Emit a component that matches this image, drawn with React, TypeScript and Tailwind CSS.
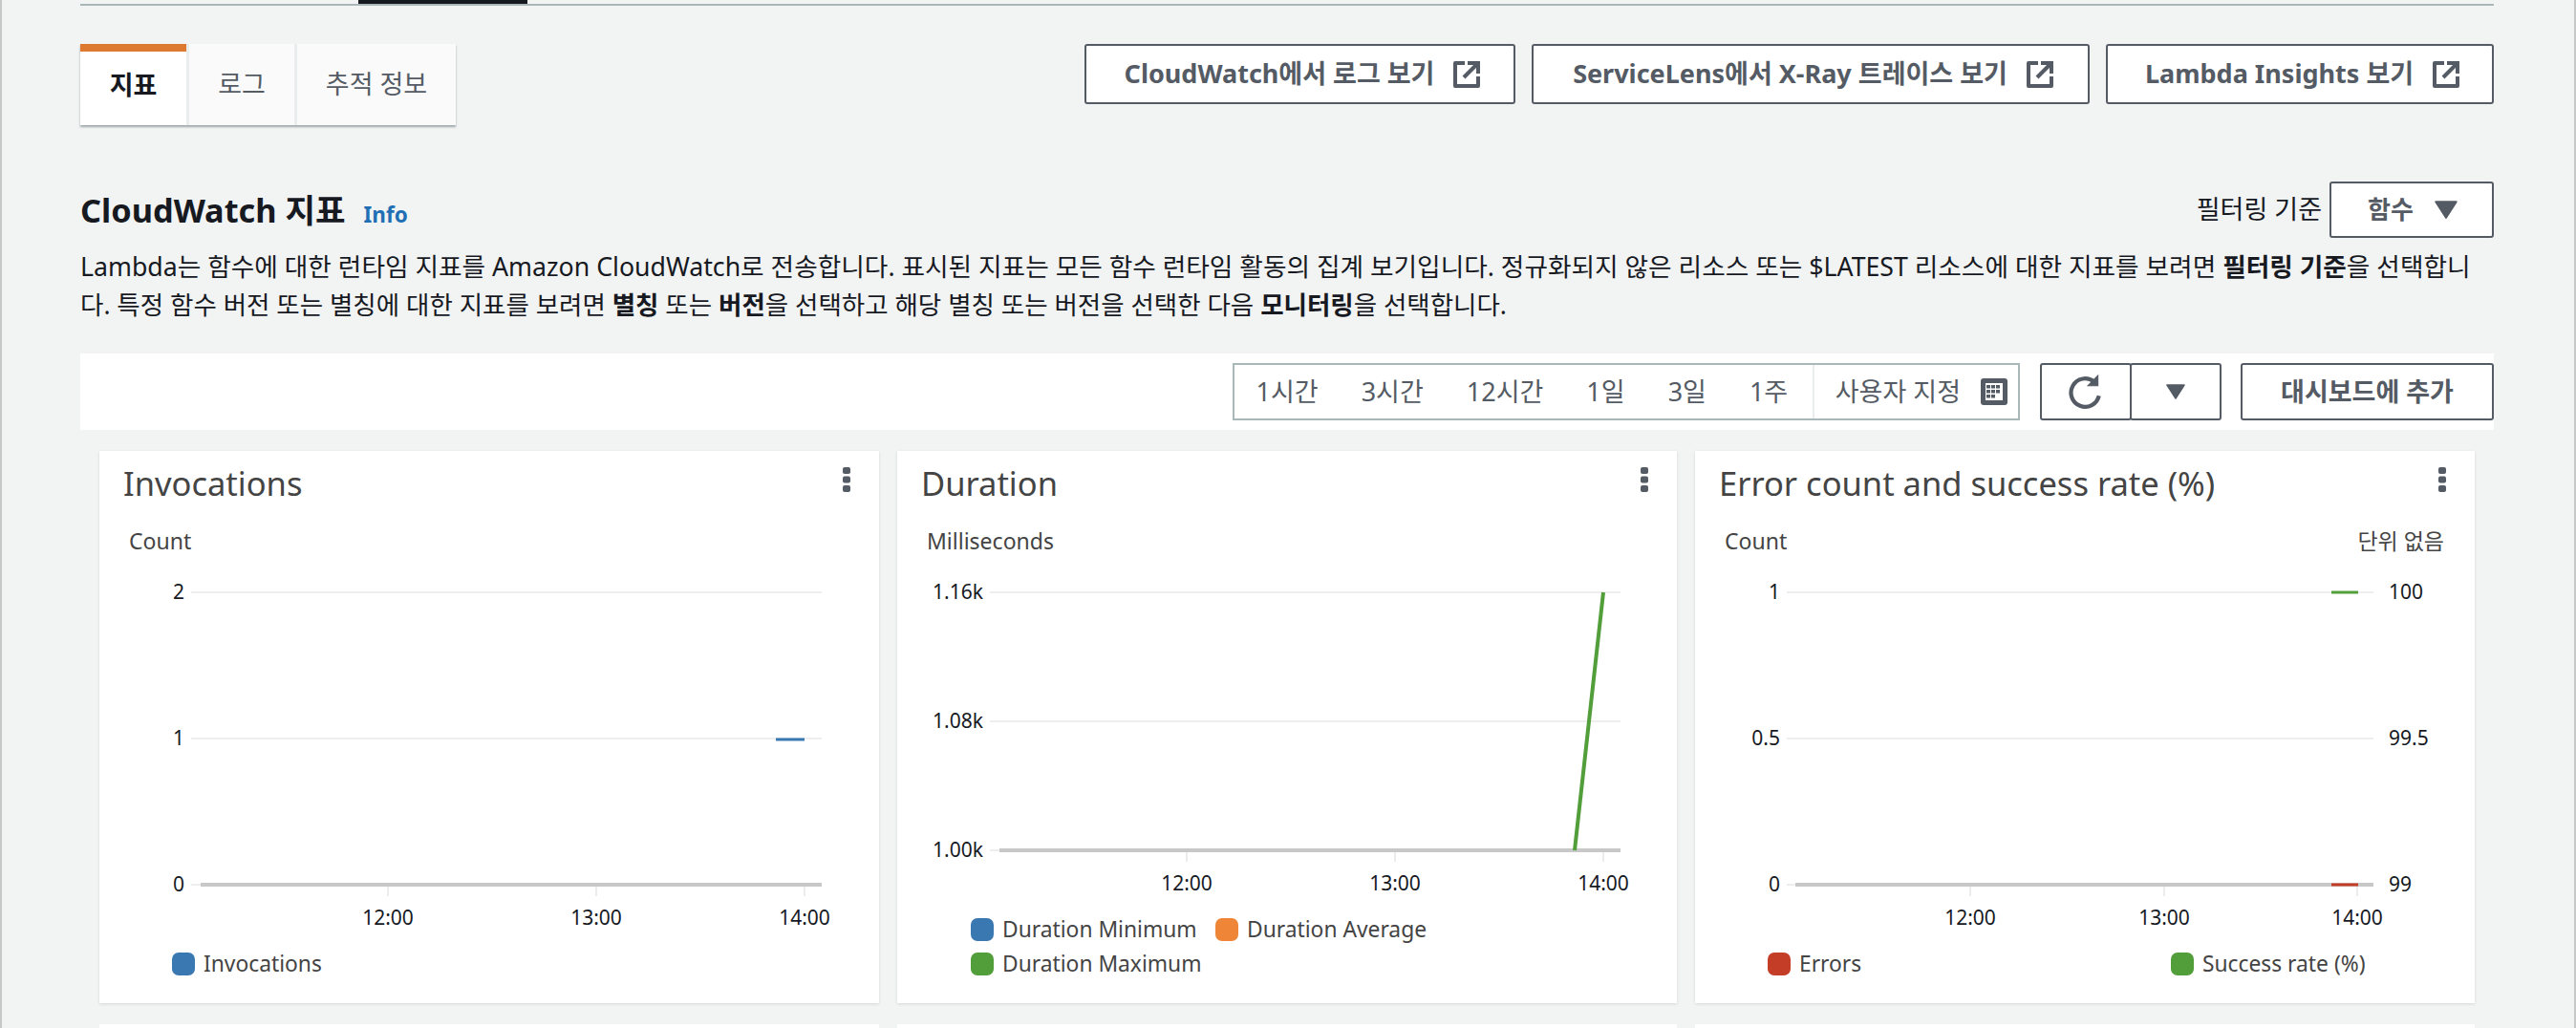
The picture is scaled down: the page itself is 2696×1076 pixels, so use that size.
import React from "react";

interface Segment {
  x1: number;
  y1: number;
  x2: number;
  y2: number;
  color: string;
  width?: number;
}

interface ChartProps {
  title: string;
  unit: string;
  rightUnit?: string;
  height: number;
  gridFrom: number;
  gridTo: number;
  axisFrom: number;
  gridY: number[];
  leftLabels: string[];
  labelX: number;
  rightLabels?: string[];
  ticks: number[];
  segments: Segment[];
  children: React.ReactNode;
}

const ExternalIcon = () => (
  <svg width="30" height="30" viewBox="0 0 30 30" fill="none" stroke="#545b64" strokeWidth="4" className="shrink-0">
    <path d="M13 3H3v24h24V17" strokeLinejoin="round" />
    <path d="M12 18L25 5" />
    <path d="M16 3h11v11" />
  </svg>
);

const Caret = ({ size = 24 }: { size?: number }) => (
  <svg width={size} height={size * 0.8} viewBox="0 0 20 16" fill="#545b64">
    <path d="M1 1h18l-9 14z" stroke="#545b64" strokeWidth="1.5" strokeLinejoin="round" />
  </svg>
);

const CalendarIcon = () => (
  <svg width="28" height="28" viewBox="0 0 28 28">
    <rect x="0" y="0" width="28" height="28" rx="3" fill="#545b64" />
    <rect x="5" y="5" width="18" height="18" fill="#fff" />
    {[6, 11, 16].map((y) =>
      [6, 11, 16].map((x) => (
        <rect key={`${x}-${y}`} x={x} y={y + 1} width="4" height="3.5" fill={y === 16 && x === 16 ? "#fff" : "#545b64"} />
      ))
    )}
  </svg>
);

const RefreshIcon = () => (
  <svg width="38" height="38" viewBox="0 0 36 36" fill="none" stroke="#545b64" strokeWidth="4">
    <path d="M31 22a14 14 0 1 1-5-14" />
    <path d="M30 2v10H20z" fill="#545b64" strokeWidth="1" />
  </svg>
);

const Kebab = () => (
  <svg width="8" height="26" viewBox="0 0 8 26" fill="#545b64" className="shrink-0">
    <rect x="0" y="0" width="8" height="7" rx="2" />
    <rect x="0" y="9.5" width="8" height="7" rx="2" />
    <rect x="0" y="19" width="8" height="7" rx="2" />
  </svg>
);

const LinkButton = ({ label, width }: { label: string; width: string }) => (
  <button className={`flex h-[63px] items-center justify-center gap-[19px] rounded-[3px] border-2 border-[#545b64] bg-white pl-[6px] text-[27px] font-bold text-[#545b64] ${width}`}>
    {label}
    <ExternalIcon />
  </button>
);

const Swatch = ({ color }: { color: string }) => (
  <span className="mr-[9px] inline-block h-[24px] w-[24px] rounded-[7px]" style={{ backgroundColor: color }} />
);

const Chart = ({
  title,
  unit,
  rightUnit,
  height,
  gridFrom,
  gridTo,
  axisFrom,
  gridY,
  leftLabels,
  labelX,
  rightLabels,
  ticks,
  segments,
  children,
}: ChartProps) => {
  const axisY = gridY[gridY.length - 1];
  return (
    <div className="flex h-[578px] flex-col bg-white shadow-[0_1px_3px_rgba(0,28,36,0.12)]">
      <div className="flex h-[68px] items-center justify-between pl-[25px] pr-[30px]">
        <h3 className="text-[34.5px] font-normal text-[#444444]">{title}</h3>
        <span className="mb-[8px] flex h-[26px] items-start">
          <Kebab />
        </span>
      </div>
      <div className="flex h-[50px] items-center justify-between pl-[31px] pr-[32px] pt-[2px] text-[23px] text-[#444444]">
        <span>{unit}</span>
        {rightUnit && <span>{rightUnit}</span>}
      </div>
      <svg width="816" height={height} viewBox={`0 0 816 ${height}`} className="block" fontSize="21">
        {gridY.map((y) => (
          <line key={y} x1={gridFrom} x2={gridTo} y1={y} y2={y} stroke="#eeeeee" strokeWidth="2" />
        ))}
        {ticks.map((x) => (
          <line key={x} x1={x} x2={x} y1={axisY} y2={axisY + 12} stroke="#e6e6e6" strokeWidth="1.5" />
        ))}
        <line x1={axisFrom} x2={gridTo} y1={axisY} y2={axisY} stroke="#c8c8c8" strokeWidth="4" />
        {segments.map((s, i) => (
          <line key={i} x1={s.x1} x2={s.x2} y1={s.y1} y2={s.y2} stroke={s.color} strokeWidth={s.width ?? 3} />
        ))}
        {leftLabels.map((label, i) => (
          <text key={label} x={labelX} y={gridY[i] + 7} textAnchor="end" fill="#16191f">
            {label}
          </text>
        ))}
        {rightLabels?.map((label, i) => (
          <text key={label} x={726} y={gridY[i] + 7} fill="#16191f">
            {label}
          </text>
        ))}
        {["12:00", "13:00", "14:00"].map((label, i) => (
          <text key={label} x={ticks[i]} y={axisY + 42} textAnchor="middle" fill="#16191f">
            {label}
          </text>
        ))}
      </svg>
      {children}
    </div>
  );
};

const LegendItem = ({ color, label, className = "" }: { color: string; label: string; className?: string }) => (
  <div className={`flex h-[36px] items-center text-[22.8px] text-[#444444] ${className}`}>
    <Swatch color={color} />
    {label}
  </div>
);

const App = () => {
  const ranges = ["1시간", "3시간", "12시간", "1일", "3일", "1주"];

  return (
    <div className="h-[1076px] w-[2696px] overflow-hidden border-x-2 border-[#c4c8c8] bg-[#f2f3f3] pl-[82px] pr-[84px] font-['Noto_Sans','Noto_Sans_CJK_KR',sans-serif] text-[#16191f]">
      <div className="h-[6px] border-b-2 border-[#aab7b8]">
        <div className="ml-[291px] h-[4px] w-[177px] bg-[#16191f]" />
      </div>

      <div className="mt-[40px] flex items-start justify-between">
        <div className="flex h-[85px] bg-[#eaeded] shadow-[0_2px_2px_rgba(0,28,36,0.35)]">
          <div className="flex w-[111px] items-center justify-center border-t-[8px] border-[#dd7a30] bg-white pb-[6px] text-[27px] font-bold">지표</div>
          <div className="ml-[3px] flex w-[110px] items-center justify-center bg-[#fafafa] text-[27px] text-[#545b64]">로그</div>
          <div className="ml-[3px] flex w-[166px] items-center justify-center bg-[#fafafa] text-[27px] text-[#545b64]">추적 정보</div>
        </div>
        <div className="flex gap-[17px]">
          <LinkButton label="CloudWatch에서 로그 보기" width="w-[451px]" />
          <LinkButton label="ServiceLens에서 X-Ray 트레이스 보기" width="w-[584px]" />
          <LinkButton label="Lambda Insights 보기" width="w-[406px]" />
        </div>
      </div>

      <div className="mt-[59px] flex h-[59px] items-center justify-between">
        <div className="flex items-baseline gap-[19px]">
          <h2 className="text-[34.3px] font-bold">CloudWatch 지표</h2>
          <a className="text-[22.5px] font-bold text-[#1f6fb5]">Info</a>
        </div>
        <div className="flex items-center gap-[8px]">
          <span className="text-[27px]">필터링 기준</span>
          <button className="flex h-[59px] w-[172px] items-center justify-center gap-[22px] rounded-[3px] border-2 border-[#545b64] bg-white pl-[2px] text-[26px] font-bold text-[#545b64]">
            함수
            <Caret />
          </button>
        </div>
      </div>

      <p className="mt-[10px] whitespace-nowrap text-[26.7px] leading-[40px]">
        Lambda는 함수에 대한 런타임 지표를 Amazon CloudWatch로 전송합니다. 표시된 지표는 모든 함수 런타임 활동의 집계 보기입니다. 정규화되지 않은 리소스 또는 $LATEST 리소스에 대한 지표를 보려면 <b>필터링 기준</b>을 선택합니
        <br />
        <span className="text-[26.5px]">
          다. 특정 함수 버전 또는 별칭에 대한 지표를 보려면 <b>별칭</b> 또는 <b>버전</b>을 선택하고 해당 별칭 또는 버전을 선택한 다음 <b>모니터링</b>을 선택합니다.
        </span>
      </p>

      <div className="mt-[31px] flex h-[80px] items-center justify-end bg-white">
        <div className="flex h-[60px] w-[824px] items-center border-2 border-[#aab7b8] text-[27px] text-[#545b64]">
          {ranges.map((r) => (
            <span key={r} className="px-[22.5px]">
              {r}
            </span>
          ))}
          <span className="ml-auto flex h-full items-center gap-[21px] border-l-2 border-[#eaeded] pl-[22px] pr-[11px]">
            사용자 지정
            <CalendarIcon />
          </span>
        </div>
        <div className="ml-[21px] flex h-[60px]">
          <button className="flex w-[96px] items-center justify-center rounded-[3px] border-2 border-[#545b64] bg-white">
            <RefreshIcon />
          </button>
          <button className="-ml-[2px] flex w-[96px] items-center justify-center rounded-[3px] border-2 border-[#545b64] bg-white">
            <Caret size={20} />
          </button>
        </div>
        <button className="ml-[20px] h-[60px] w-[265px] rounded-[3px] border-2 border-[#545b64] bg-white text-[27px] font-bold text-[#545b64]">대시보드에 추가</button>
      </div>

      <div className="ml-[20px] mt-[22px] grid w-[2486px] grid-cols-3 gap-x-[19px] gap-y-[22px]">
        <Chart
          title="Invocations"
          unit="Count"
          height={401}
          gridFrom={96}
          gridTo={756}
          axisFrom={106}
          gridY={[30, 183, 336]}
          leftLabels={["2", "1", "0"]}
          labelX={89}
          ticks={[302, 520, 738]}
          segments={[{ x1: 708, x2: 738, y1: 184, y2: 184, color: "#3a78b2" }]}
        >
          <div className="pl-[76px]">
            <LegendItem color="#3a78b2" label="Invocations" />
          </div>
        </Chart>

        <Chart
          title="Duration"
          unit="Milliseconds"
          height={365}
          gridFrom={97}
          gridTo={757}
          axisFrom={107}
          gridY={[30, 165, 300]}
          leftLabels={["1.16k", "1.08k", "1.00k"]}
          labelX={90}
          ticks={[303, 521, 739]}
          segments={[{ x1: 709, x2: 739, y1: 300, y2: 30, color: "#519e3a", width: 4 }]}
        >
          <div className="pl-[77px]">
            <div className="flex">
              <LegendItem color="#3a78b2" label="Duration Minimum" className="w-[256px]" />
              <LegendItem color="#ef8637" label="Duration Average" />
            </div>
            <LegendItem color="#519e3a" label="Duration Maximum" />
          </div>
        </Chart>

        <Chart
          title="Error count and success rate (%)"
          unit="Count"
          rightUnit="단위 없음"
          height={401}
          gridFrom={96}
          gridTo={710}
          axisFrom={105}
          gridY={[30, 183, 336]}
          leftLabels={["1", "0.5", "0"]}
          labelX={89}
          rightLabels={["100", "99.5", "99"]}
          ticks={[288, 491, 693]}
          segments={[
            { x1: 666, x2: 694, y1: 30, y2: 30, color: "#519e3a" },
            { x1: 666, x2: 694, y1: 336, y2: 336, color: "#c43d27" },
          ]}
        >
          <div className="flex pl-[76px]">
            <LegendItem color="#c43d27" label="Errors" className="w-[422px]" />
            <LegendItem color="#519e3a" label="Success rate (%)" />
          </div>
        </Chart>

        <div className="h-[100px] bg-white" />
        <div className="h-[100px] bg-white" />
        <div className="h-[100px] bg-white" />
      </div>
    </div>
  );
};

export default App;
